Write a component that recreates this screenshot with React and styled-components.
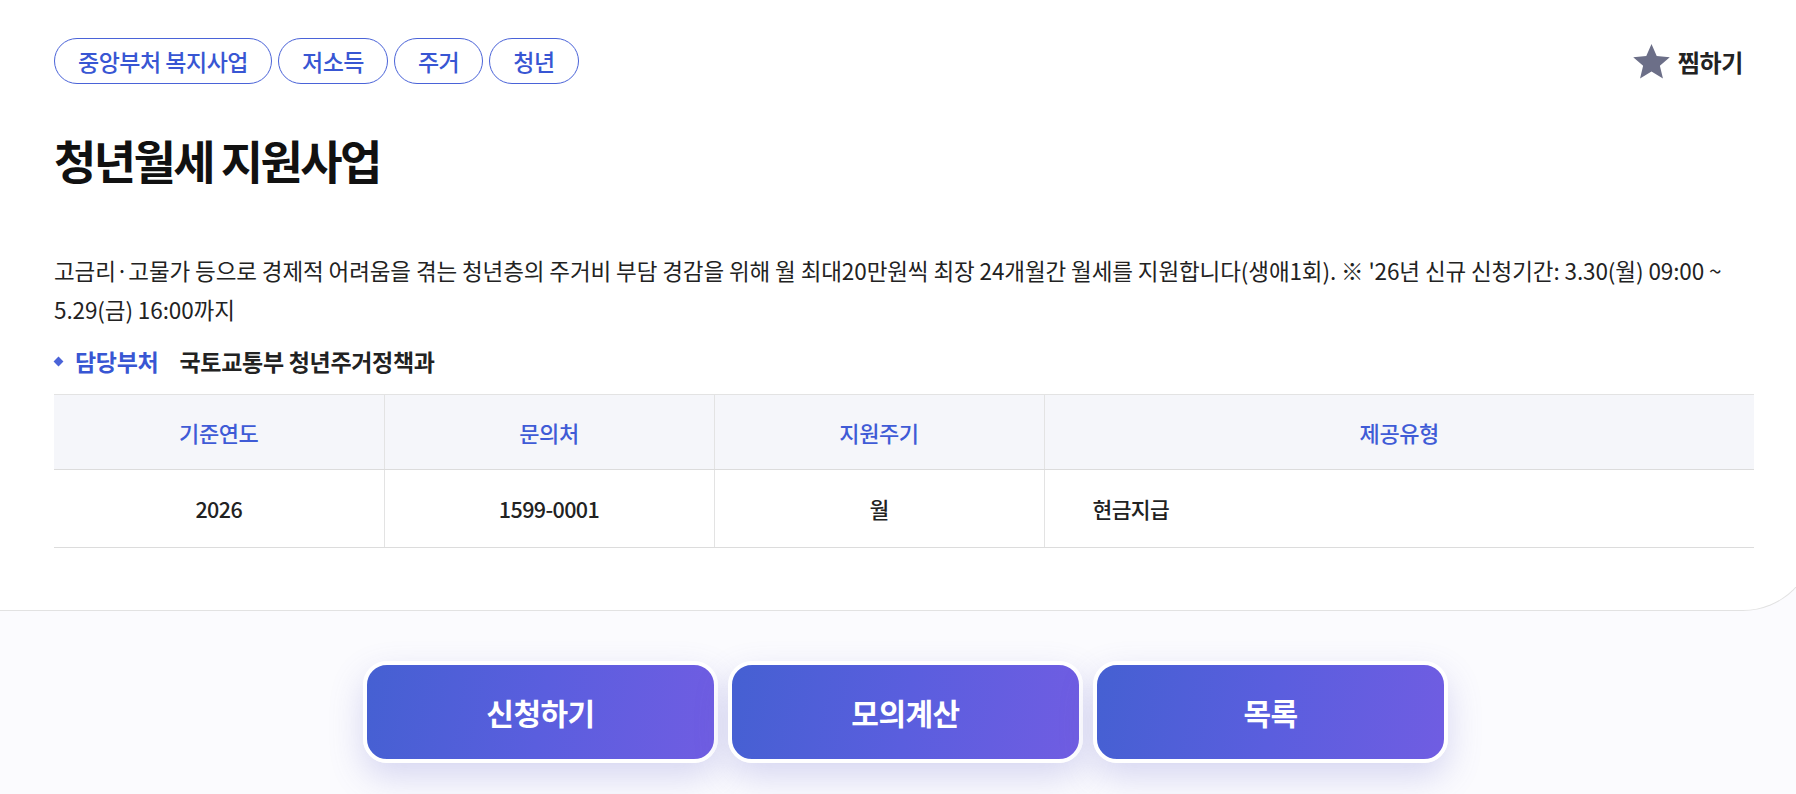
import React from 'react';
import styled, { createGlobalStyle } from 'styled-components';

const GlobalStyle = createGlobalStyle`
  html, body {
    margin: 0;
    padding: 0;
    background: #fbfbfe;
    font-family: "Noto Sans CJK KR", "Noto Sans", sans-serif;
    color: #222;
  }
  * { box-sizing: border-box; }
`;

const tags = ['중앙부처 복지사업', '저소득', '주거', '청년'];

const info = [
  { head: '기준연도', value: '2026' },
  { head: '문의처', value: '1599-0001' },
  { head: '지원주기', value: '월' },
  { head: '제공유형', value: '현금지급', left: true },
];

const actions = ['신청하기', '모의계산', '목록'];

const App = () => {
  return (
    <Page>
      <GlobalStyle />
      <Card>
        <TopRow>
          <Tags>
            {tags.map((t) => (
              <Tag key={t}>{t}</Tag>
            ))}
          </Tags>
          <Favorite type="button">
            <svg width="41" height="41" viewBox="0 0 24 24">
              <path
                d="M12 1.8l3.05 7.05 7.65.6-5.8 5 1.8 7.45L12 17.9l-6.7 4 1.8-7.45-5.8-5 7.65-.6z"
                fill="#6c6f88"
              />
            </svg>
            찜하기
          </Favorite>
        </TopRow>

        <Title>청년월세 지원사업</Title>

        <Desc>
          고금리·고물가 등으로 경제적 어려움을 겪는 청년층의 주거비 부담 경감을 위해 월 최대20만원씩 최장 24개월간 월세를 지원합니다(생애1회). ※ '26년 신규 신청기간: 3.30(월) 09:00 ~ 5.29(금) 16:00까지
        </Desc>

        <Manager>
          <Bullet />
          <ManagerLabel>담당부처</ManagerLabel>
          <ManagerValue>국토교통부 청년주거정책과</ManagerValue>
        </Manager>

        <Table>
          <thead>
            <tr>
              {info.map((c) => (
                <Th key={c.head}>{c.head}</Th>
              ))}
            </tr>
          </thead>
          <tbody>
            <tr>
              {info.map((c) => (
                <Td key={c.head} $left={c.left}>{c.value}</Td>
              ))}
            </tr>
          </tbody>
        </Table>
      </Card>

      <Actions>
        {actions.map((a) => (
          <ActionButton key={a} type="button">{a}</ActionButton>
        ))}
      </Actions>
    </Page>
  );
};

const Page = styled.div`
  width: 100%;
  min-height: 794px;
  overflow: hidden;
  background: #fbfbfe;
`;

const Card = styled.section`
  margin-right: -19px;
  padding: 38px 60px 62px 54px;
  background: #fff;
  border-bottom: 1px solid #e2e2e2;
  border-right: 1px solid #e2e2e2;
  border-bottom-right-radius: 72px;
`;

const TopRow = styled.div`
  display: flex;
  justify-content: space-between;
  align-items: center;
`;

const Tags = styled.div`
  display: flex;
  gap: 6px;
`;

const Tag = styled.span`
  display: inline-flex;
  align-items: center;
  height: 46px;
  padding: 0 23px;
  border: 1px solid #4a63d8;
  border-radius: 23px;
  color: #3856d3;
  font-size: 23px;
  font-weight: 500;
  letter-spacing: -0.5px;
`;

const Favorite = styled.button`
  display: flex;
  align-items: center;
  gap: 6px;
  margin-right: 11px;
  padding: 0;
  border: none;
  background: none;
  font-family: inherit;
  font-size: 24px;
  font-weight: 700;
  color: #222;
  letter-spacing: -0.3px;
  cursor: pointer;
`;

const Title = styled.h1`
  margin: 50px 0 0;
  font-size: 46px;
  line-height: 50px;
  font-weight: 700;
  letter-spacing: -2.6px;
  color: #111;
`;

const Desc = styled.p`
  margin: 67px 0 0;
  font-size: 22.5px;
  line-height: 39px;
  letter-spacing: -0.1px;
  color: #222;
`;

const Manager = styled.div`
  display: flex;
  align-items: center;
  margin-top: 17px;
  height: 30px;
  font-size: 23px;
  letter-spacing: -0.3px;
`;

const Bullet = styled.span`
  width: 7px;
  height: 7px;
  margin-left: 1px;
  background: #4a63d8;
  transform: rotate(45deg);
`;

const ManagerLabel = styled.span`
  margin-left: 13px;
  color: #3856d3;
  font-weight: 700;
`;

const ManagerValue = styled.span`
  margin-left: 21px;
  color: #222;
  font-weight: 600;
`;

const Table = styled.table`
  width: 100%;
  margin-top: 18px;
  border-collapse: collapse;
  table-layout: fixed;
  border-top: 1px solid #e3e3e3;

  th:nth-child(-n + 3), td:nth-child(-n + 3) {
    width: 330px;
  }
`;

const Th = styled.th`
  height: 75px;
  background: #f5f6fa;
  border-bottom: 1px solid #dcdcdc;
  border-left: 1px solid #e3e3e3;
  color: #3f5bd6;
  font-size: 22px;
  font-weight: 500;
  letter-spacing: -0.4px;
  text-align: center;

  &:first-child { border-left: none; }
`;

const Td = styled.td`
  height: 78px;
  padding: 0 0 0 ${(p) => (p.$left ? '48px' : '0')};
  border-bottom: 1px solid #dcdcdc;
  border-left: 1px solid #e3e3e3;
  color: #222;
  font-size: 21.5px;
  font-weight: 500;
  letter-spacing: -0.6px;
  text-align: ${(p) => (p.$left ? 'left' : 'center')};

  &:first-child { border-left: none; }
`;

const Actions = styled.div`
  display: flex;
  justify-content: center;
  gap: 10px;
  padding: 50px 0 0 15px;
`;

const ActionButton = styled.button`
  width: 355px;
  height: 102px;
  border: 4px solid #fff;
  border-radius: 24px;
  background: linear-gradient(100deg, #4560d2 0%, #5a5ede 50%, #705de2 100%);
  box-shadow: 0 14px 34px rgba(100, 100, 200, 0.24);
  color: #fff;
  font-family: inherit;
  font-size: 30px;
  font-weight: 700;
  letter-spacing: -0.5px;
  cursor: pointer;
`;

export default App;
